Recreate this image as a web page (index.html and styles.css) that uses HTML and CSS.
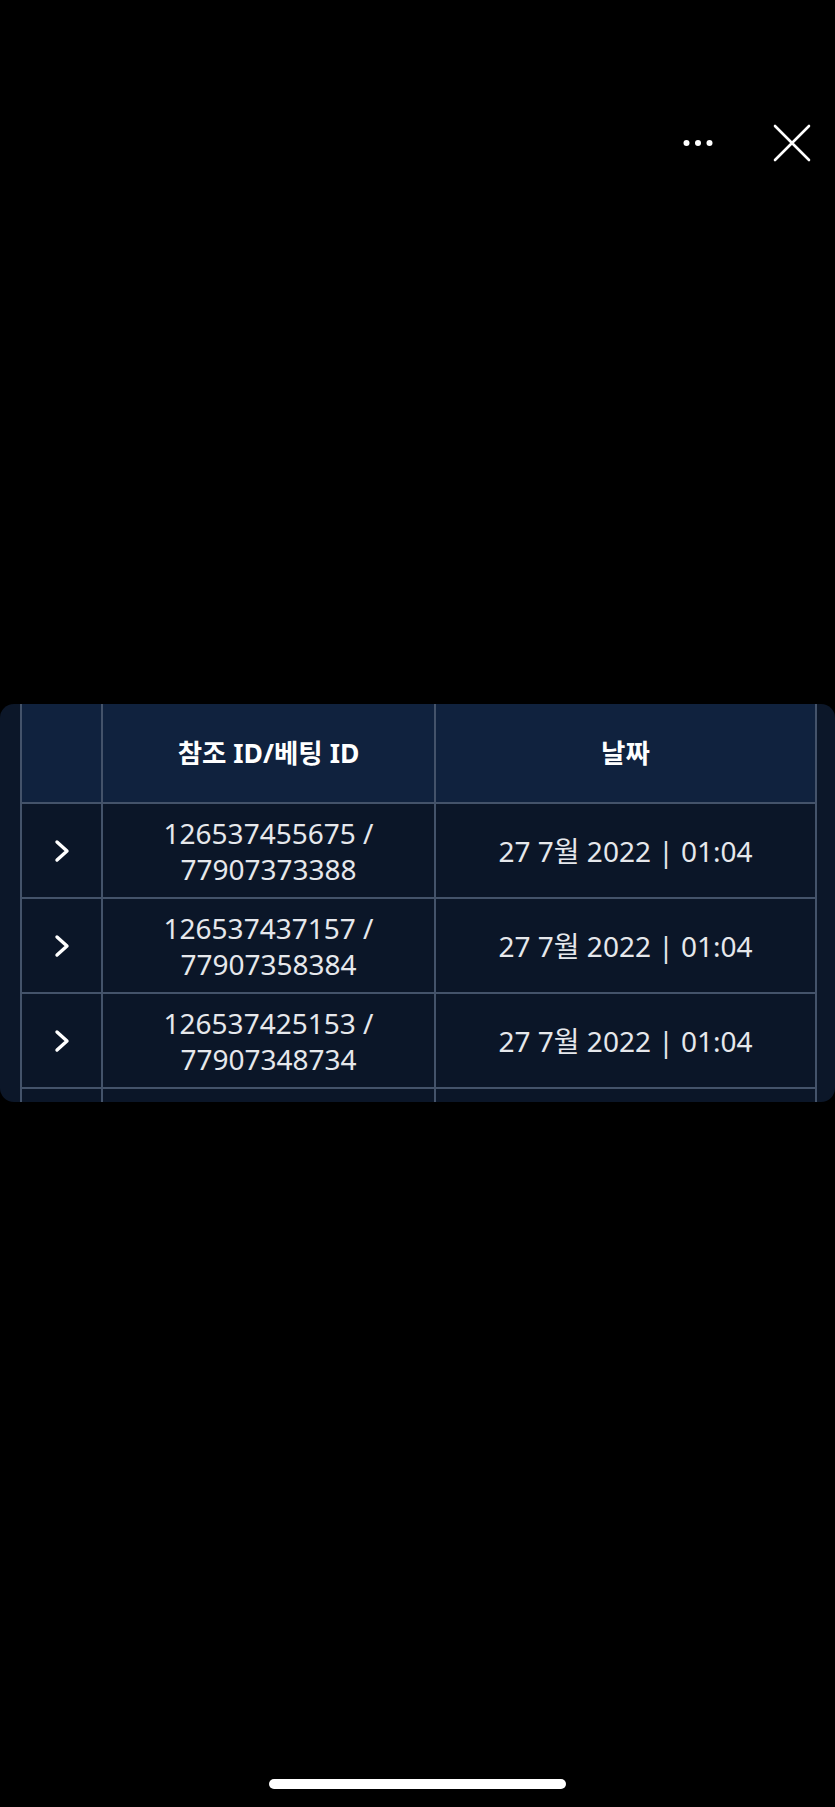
FILE: index.html
```html
<!DOCTYPE html>
<html lang="ko">
<head>
<meta charset="utf-8">
<title>베팅 내역</title>
<link rel="stylesheet" href="styles.css">
</head>
<body>
<div class="screen">
  <header class="topbar">
    <button class="icon-btn more" aria-label="더보기">
      <svg width="30" height="8" viewBox="0 0 30 8"><circle cx="3.5" cy="4" r="3" fill="#fff"/><circle cx="15" cy="4" r="3" fill="#fff"/><circle cx="26.5" cy="4" r="3" fill="#fff"/></svg>
    </button>
    <button class="icon-btn close" aria-label="닫기">
      <svg width="38" height="38" viewBox="0 0 38 38"><path d="M2 2 L36 36 M36 2 L2 36" stroke="#fff" stroke-width="2.6" stroke-linecap="round"/></svg>
    </button>
  </header>

  <section class="panel">
    <table class="bets">
      <colgroup><col class="c1"><col class="c2"><col class="c3"></colgroup>
      <thead>
        <tr><th></th><th>참조 ID/베팅 ID</th><th>날짜</th></tr>
      </thead>
      <tbody>
        <tr>
          <td class="chev"><svg width="16" height="24" viewBox="0 0 16 24"><polyline points="3,3 13,12 3,21" fill="none" stroke="#fff" stroke-width="3.4" stroke-linecap="round" stroke-linejoin="round"/></svg></td>
          <td>126537455675 /<br>77907373388</td>
          <td>27 7월 2022 | 01:04</td>
        </tr>
        <tr>
          <td class="chev"><svg width="16" height="24" viewBox="0 0 16 24"><polyline points="3,3 13,12 3,21" fill="none" stroke="#fff" stroke-width="3.4" stroke-linecap="round" stroke-linejoin="round"/></svg></td>
          <td>126537437157 /<br>77907358384</td>
          <td>27 7월 2022 | 01:04</td>
        </tr>
        <tr>
          <td class="chev"><svg width="16" height="24" viewBox="0 0 16 24"><polyline points="3,3 13,12 3,21" fill="none" stroke="#fff" stroke-width="3.4" stroke-linecap="round" stroke-linejoin="round"/></svg></td>
          <td>126537425153 /<br>77907348734</td>
          <td>27 7월 2022 | 01:04</td>
        </tr>
        <tr>
          <td class="chev"></td>
          <td></td>
          <td></td>
        </tr>
      </tbody>
    </table>
  </section>

  <div class="home-area"><div class="home-indicator"></div></div>
</div>
</body>
</html>
```

FILE: styles.css
```css
html, body {
  margin: 0;
  padding: 0;
  background: #000;
}

.screen {
  width: 835px;
  height: 1807px;
  display: flex;
  flex-direction: column;
  font-family: "Noto Sans", "Open Sans", "Noto Sans CJK KR", sans-serif;
  color: #e8eaee;
}

.topbar {
  height: 286px;
  display: flex;
  justify-content: flex-end;
  align-items: center;
  gap: 60px;
  padding-right: 24px;
  box-sizing: border-box;
}

.icon-btn {
  background: none;
  border: 0;
  padding: 0;
  margin: 0;
  display: flex;
  align-items: center;
  justify-content: center;
  cursor: pointer;
}

.panel {
  margin-top: 418px;
  height: 398px;
  overflow: hidden;
  background: #0c1729;
  border-radius: 14px;
  padding: 0 20px 0 20px;
}

.bets {
  width: 795px;
  border-collapse: collapse;
  table-layout: fixed;
  font-family: "Noto Sans", "Noto Sans CJK KR", sans-serif;
}

.c1 { width: 81px; }
.c2 { width: 333px; }
.c3 { width: 381px; }

.bets th,
.bets td {
  border: 2px solid #44536a;
  text-align: center;
  vertical-align: middle;
  padding: 0;
}

.bets thead tr th {
  border-top: 0;
  height: 95px;
  padding-bottom: 3px;
  background: #10223e;
  color: #ffffff;
  font-size: 26.5px;
  font-weight: 700;
}

.bets tbody td {
  height: 93px;
  background: #0b1628;
  font-size: 28px;
  line-height: 36px;
  color: #e6e8ec;
  font-weight: 400;
}

.bets td.chev svg {
  display: block;
  margin: 0 auto;
}

.home-area {
  flex: 1;
  display: flex;
  align-items: flex-end;
  justify-content: center;
  padding-bottom: 18px;
}

.home-indicator {
  width: 297px;
  height: 10px;
  border-radius: 5px;
  background: #ffffff;
}
```
